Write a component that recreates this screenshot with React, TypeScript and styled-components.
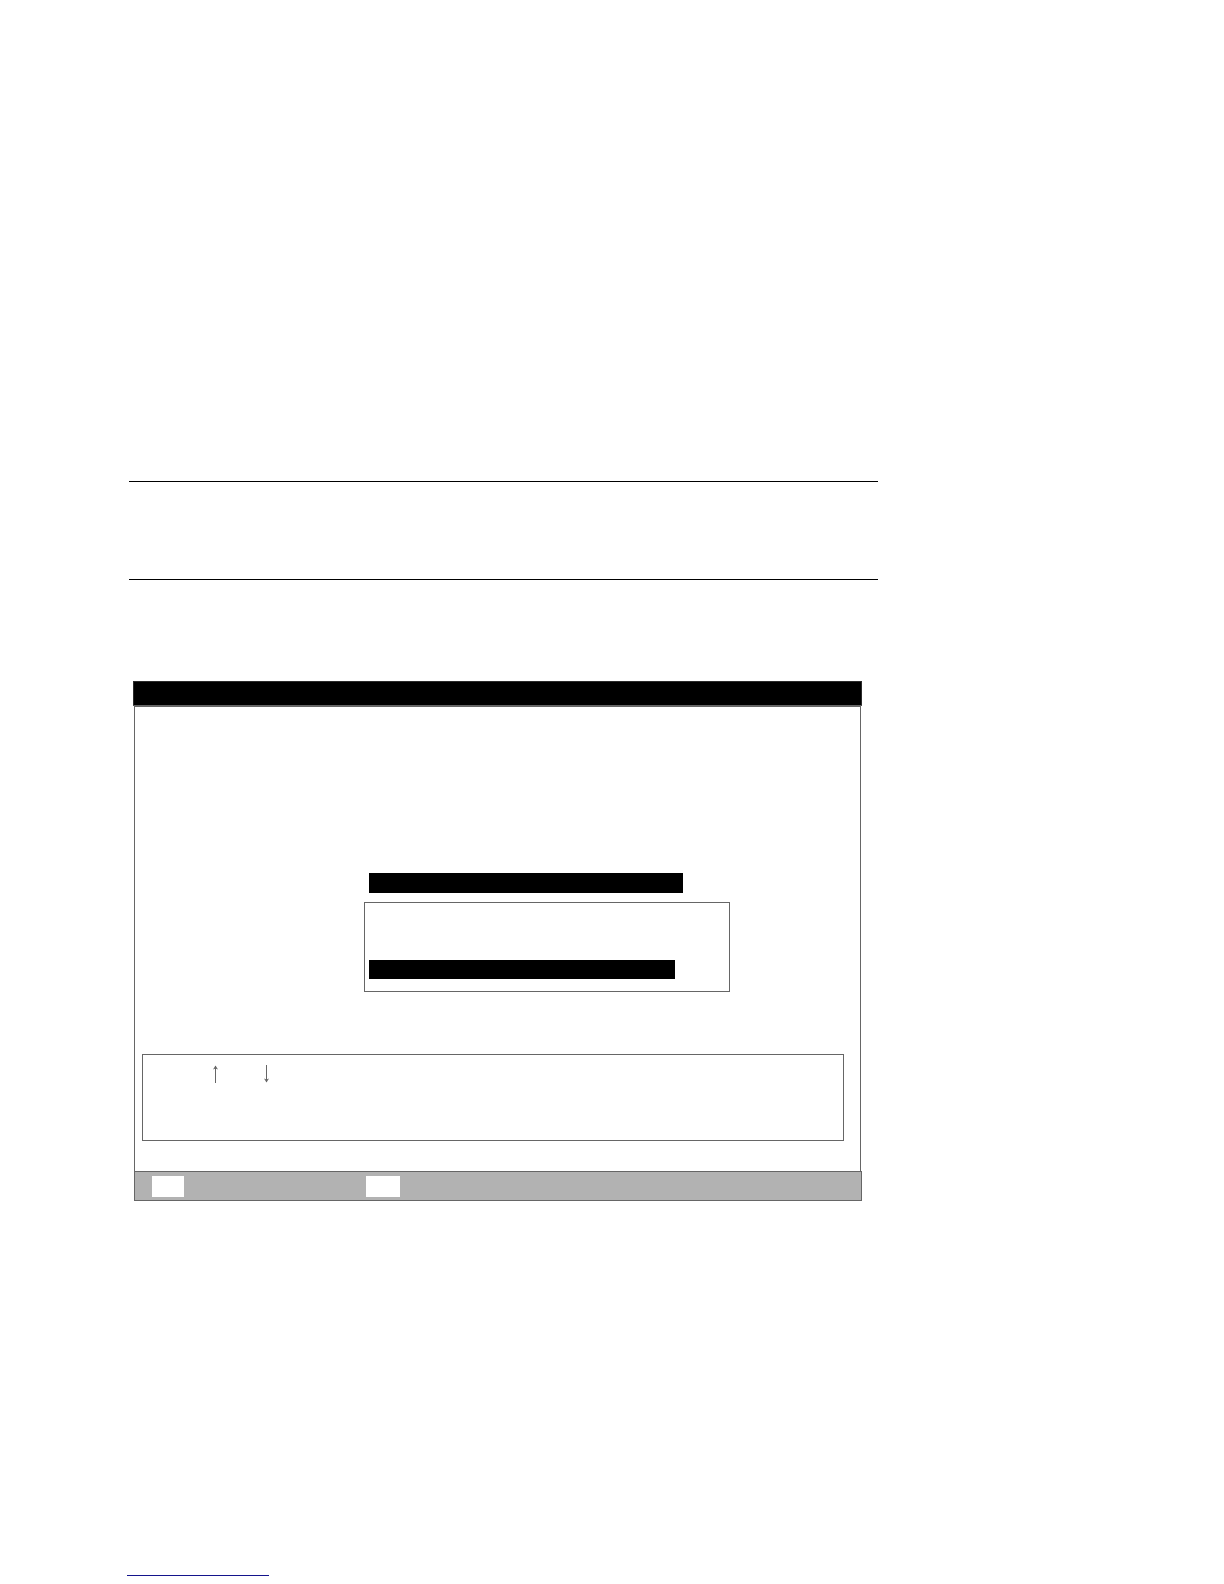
import React from 'react';
import styled, { createGlobalStyle } from 'styled-components';

const GlobalStyle = createGlobalStyle`
  *, *::before, *::after { box-sizing: border-box; }
  body {
    margin: 0;
    background: #fff;
    font-family: "Liberation Sans", Arial, sans-serif;
  }
`;

const line = '#666666';

const Page = styled.main`
  display: flex;
  flex-direction: column;
  align-items: flex-start;
  padding: 481px 16px 8px 127px;
`;

const Note = styled.section`
  width: 100%;
  max-width: 749px;
  min-height: 99px;
  margin-left: 2px;
  border-top: 1px solid #000;
  border-bottom: 1px solid #000;
`;

const Screen = styled.section`
  display: flex;
  flex-direction: column;
  width: 100%;
  max-width: 729px;
  margin: 101px 0 0 6px;
`;

const TitleBar = styled.header`
  height: 25px;
  background: #000;
  border: 1px solid #2b2b2b;
  border-bottom-color: ${line};
`;

const ScreenBody = styled.div`
  display: flex;
  flex-direction: column;
  margin: 0 1px;
  padding: 166px 16px 30px 7px;
  border: 1px solid ${line};
  border-bottom: 0;
`;

const Menu = styled.div`
  display: flex;
  flex-direction: column;
  gap: 9px;
  width: 100%;
  max-width: 366px;
  margin-left: 222px;
`;

const Highlight = styled.div<{ $width: number; $height: number }>`
  width: 100%;
  max-width: ${({ $width }) => $width}px;
  height: ${({ $height }) => $height}px;
  background: #000;
`;

const MenuHeading = styled.div`
  padding-left: 5px;
`;

const OptionBox = styled.div`
  padding: 57px 4px 12px;
  border: 1px solid ${line};
`;

const HelpBox = styled.div`
  display: flex;
  gap: 42px;
  height: 87px;
  margin-top: 62px;
  padding: 10px 68px;
  border: 1px solid ${line};
`;

const Arrow = styled.svg`
  width: 9px;
  height: 19px;
  fill: none;
  stroke: ${line};
`;

const KeyBar = styled.footer`
  display: flex;
  align-items: center;
  gap: 182px;
  height: 30px;
  margin-left: 1px;
  padding-left: 17px;
  background: #b2b2b2;
  border: 1px solid ${line};
`;

const KeyCap = styled.span<{ $width: number }>`
  width: ${({ $width }) => $width}px;
  height: 21px;
  background: #fff;
`;

const FooterLink = styled.a`
  width: 142px;
  height: 20px;
  margin-top: 355px;
  border-bottom: 1px solid #14148c;
`;

export default function App() {
  return (
    <>
      <GlobalStyle />
      <Page>
        <Note />
        <Screen>
          <TitleBar />
          <ScreenBody>
            <Menu>
              <MenuHeading>
                <Highlight $width={314} $height={20} />
              </MenuHeading>
              <OptionBox>
                <Highlight $width={306} $height={19} />
              </OptionBox>
            </Menu>
            <HelpBox>
              <Arrow viewBox="0 0 9 19" aria-hidden="true">
                <path d="M4.5 1v17" />
                <path d="M4.5 0.5L2 4.5L4.5 3.5L7 4.5z" fill={line} stroke="none" />
              </Arrow>
              <Arrow viewBox="0 0 9 19" aria-hidden="true">
                <path d="M4.5 0v17" />
                <path d="M4.5 17.5L2 13.5L4.5 14.5L7 13.5z" fill={line} stroke="none" />
              </Arrow>
            </HelpBox>
          </ScreenBody>
          <KeyBar>
            <KeyCap $width={32} />
            <KeyCap $width={34} />
          </KeyBar>
        </Screen>
        <FooterLink href="#" aria-label="Footer link" />
      </Page>
    </>
  );
}
